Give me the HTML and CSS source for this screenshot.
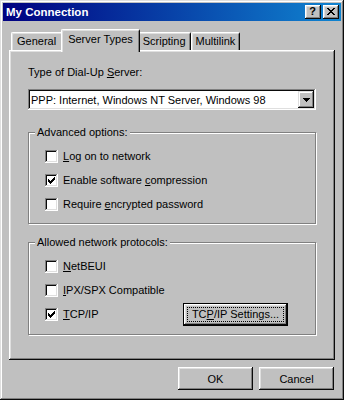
FILE: index.html
```html
<!DOCTYPE html>
<html>
<head>
<meta charset="utf-8">
<link rel="stylesheet" href="styles.css">
</head>
<body>
<div class="window">
  <div class="titlebar">
    <span class="title">My Connection</span>
    <div class="title-controls">
      <button class="tb-btn help">?</button>
      <button class="tb-btn close"><svg width="8" height="7" viewBox="0 0 8 7" shape-rendering="crispEdges"><path d="M0 0h2v1h-2z M6 0h2v1h-2z M1 1h2v1h-2z M5 1h2v1h-2z M2 2h4v1h-4z M3 3h2v1h-2z M2 4h4v1h-4z M1 5h2v1h-2z M5 5h2v1h-2z M0 6h2v1h-2z M6 6h2v1h-2z" fill="#000"/></svg></button>
    </div>
  </div>
  <div class="dialog">
    <div class="tabs">
      <div class="tab tab-first">General</div>
      <div class="tab active">Server Types</div>
      <div class="tab">Scripting</div>
      <div class="tab">Multilink</div>
    </div>
    <div class="panel">
      <div class="field-label">Type of Dial-Up <u>S</u>erver:</div>
      <div class="select">
        <span class="select-text">PPP: Internet, Windows NT Server, Windows 98</span>
        <span class="select-btn"><svg width="7" height="4" viewBox="0 0 7 4" shape-rendering="crispEdges"><path d="M0 0h7v1h-7z M1 1h5v1h-5z M2 2h3v1h-3z M3 3h1v1h-1z" fill="#000"/></svg></span>
      </div>
      <fieldset class="group">
        <legend>Advanced options:</legend>
        <div class="check-row"><span class="checkbox"></span><span><u>L</u>og on to network</span></div>
        <div class="check-row"><span class="checkbox checked"><svg width="7" height="7" viewBox="0 0 7 7" shape-rendering="crispEdges"><path d="M6 0h1v1h-1z M5 1h2v1h-2z M0 2h1v1h-1z M4 2h3v1h-3z M0 3h2v1h-2z M3 3h3v1h-3z M0 4h5v1h-5z M1 5h3v1h-3z M2 6h1v1h-1z" fill="#000"/></svg></span><span>Enable software <u>c</u>ompression</span></div>
        <div class="check-row"><span class="checkbox"></span><span>Require <u>e</u>ncrypted password</span></div>
      </fieldset>
      <fieldset class="group group-protocols">
        <legend>Allowed network protocols:</legend>
        <div class="check-row"><span class="checkbox"></span><span><u>N</u>etBEUI</span></div>
        <div class="check-row"><span class="checkbox"></span><span><u>I</u>PX/SPX Compatible</span></div>
        <div class="check-row"><span class="checkbox checked"><svg width="7" height="7" viewBox="0 0 7 7" shape-rendering="crispEdges"><path d="M6 0h1v1h-1z M5 1h2v1h-2z M0 2h1v1h-1z M4 2h3v1h-3z M0 3h2v1h-2z M3 3h3v1h-3z M0 4h5v1h-5z M1 5h3v1h-3z M2 6h1v1h-1z" fill="#000"/></svg></span><span><u>T</u>CP/IP</span><button class="btn btn-default"><span class="focus">TC<u>P</u>/IP Settings...</span></button></div>
      </fieldset>
    </div>
    <div class="actions">
      <button class="btn">OK</button>
      <button class="btn">Cancel</button>
    </div>
  </div>
</div>
</body>
</html>
```
FILE: styles.css
```css
* { box-sizing: border-box; }
html, body {
  margin: 0;
  padding: 0;
  background: #c0c0c0;
}
body {
  font-family: "Liberation Sans", Arial, sans-serif;
  font-size: 11px;
  color: #000;
}
u { text-decoration: underline; text-underline-offset: 1px; }

.window {
  width: 344px;
  height: 400px;
  padding: 3px;
  display: flex;
  flex-direction: column;
  background: #c0c0c0;
  box-shadow: inset -1px -1px #0a0a0a, inset 1px 1px #dfdfdf, inset -2px -2px #808080, inset 2px 2px #fff;
}

.titlebar {
  height: 18px;
  flex: none;
  display: flex;
  align-items: center;
  justify-content: space-between;
  padding: 0 2px 0 3px;
  background: linear-gradient(90deg, #000080, #1084d0);
}
.title {
  color: #fff;
  font-weight: bold;
  font-size: 11.5px;
}
.title-controls { display: flex; gap: 2px; }
.tb-btn {
  width: 16px;
  height: 14px;
  padding: 0;
  border: none;
  background: #c0c0c0;
  display: flex;
  align-items: center;
  justify-content: center;
  font-family: "Liberation Sans", Arial, sans-serif;
  font-weight: bold;
  font-size: 11px;
  line-height: 1;
  color: #000;
  box-shadow: inset -1px -1px #0a0a0a, inset 1px 1px #fff, inset -2px -2px #808080, inset 2px 2px #dfdfdf;
}
.tb-btn.help { padding: 0 1px 1px 0; }
.tb-btn.close svg { margin: 0 1px 1px 0; }

.dialog {
  flex: 1;
  display: flex;
  flex-direction: column;
  padding: 8px 6px 7px;
}

.tabs {
  display: flex;
  align-items: flex-end;
  height: 21px;
  padding-left: 2px;
  flex: none;
}
.tab {
  height: 18px;
  padding: 0 4px 1px;
  display: flex;
  align-items: center;
  background: #c0c0c0;
  border-top: 1px solid #fff;
  border-left: 1px solid #fff;
  border-right: 1px solid #0a0a0a;
  border-radius: 2px 2px 0 0;
  box-shadow: inset 1px 1px #dfdfdf, inset -1px 0 #808080;
}
.tab-first { padding: 0 6px 1px 5px; }
.tab.active {
  height: 23px;
  margin: 0 -2px -2px;
  padding: 0 6px 4px;
  position: relative;
  z-index: 1;
}

.panel {
  flex: 1;
  padding: 16px 19px 0 19px;
  box-shadow: inset -1px -1px #0a0a0a, inset 1px 1px #fff, inset -2px -2px #808080, inset 2px 2px #dfdfdf;
}
.field-label { line-height: 13px; }

.select {
  margin-top: 10px;
  height: 21px;
  display: flex;
  align-items: center;
  background: #fff;
  padding: 2px;
  box-shadow: inset -1px -1px #fff, inset 1px 1px #808080, inset -2px -2px #dfdfdf, inset 2px 2px #0a0a0a;
}
.select-text { flex: 1; padding-left: 1px; }
.select-btn {
  width: 16px;
  height: 17px;
  display: flex;
  align-items: center;
  justify-content: center;
  background: #c0c0c0;
  box-shadow: inset -1px -1px #0a0a0a, inset 1px 1px #dfdfdf, inset -2px -2px #808080, inset 2px 2px #fff;
}

.group {
  margin: 16px 0 0;
  padding: 5px 8px 7px 6px;
  border: 1px solid #808080;
  box-shadow: inset 1px 1px #fff, 1px 1px #fff;
  min-width: 0;
}
.group-protocols { margin-top: 12px; padding-bottom: 8px; }
.group legend {
  padding: 0 2px;
  line-height: 13px;
  background: #c0c0c0;
}
.check-row {
  height: 24px;
  display: flex;
  align-items: center;
  gap: 5px;
  padding-left: 10px;
}
.checkbox {
  width: 13px;
  height: 13px;
  flex: none;
  background: #fff;
  display: flex;
  align-items: center;
  justify-content: center;
  box-shadow: inset -1px -1px #fff, inset 1px 1px #808080, inset -2px -2px #dfdfdf, inset 2px 2px #0a0a0a;
}

.btn {
  width: 75px;
  height: 23px;
  padding: 0;
  border: none;
  background: #c0c0c0;
  font-family: "Liberation Sans", Arial, sans-serif;
  font-size: 11px;
  color: #000;
  box-shadow: inset -1px -1px #0a0a0a, inset 1px 1px #fff, inset -2px -2px #808080, inset 2px 2px #dfdfdf;
}
.btn-default {
  width: 105px;
  margin-left: auto;
  margin-right: 19px;
  padding: 4px;
  display: flex;
  box-shadow: inset 0 0 0 1px #000, inset -2px -2px #0a0a0a, inset 2px 2px #fff, inset -3px -3px #808080, inset 3px 3px #dfdfdf;
}
.focus {
  flex: 1;
  display: flex;
  align-items: center;
  justify-content: center;
  outline: 1px dotted #000;
  outline-offset: -1px;
}

.actions {
  margin-top: 7px;
  display: flex;
  justify-content: flex-end;
  gap: 6px;
  padding-right: 1px;
  flex: none;
}
```
